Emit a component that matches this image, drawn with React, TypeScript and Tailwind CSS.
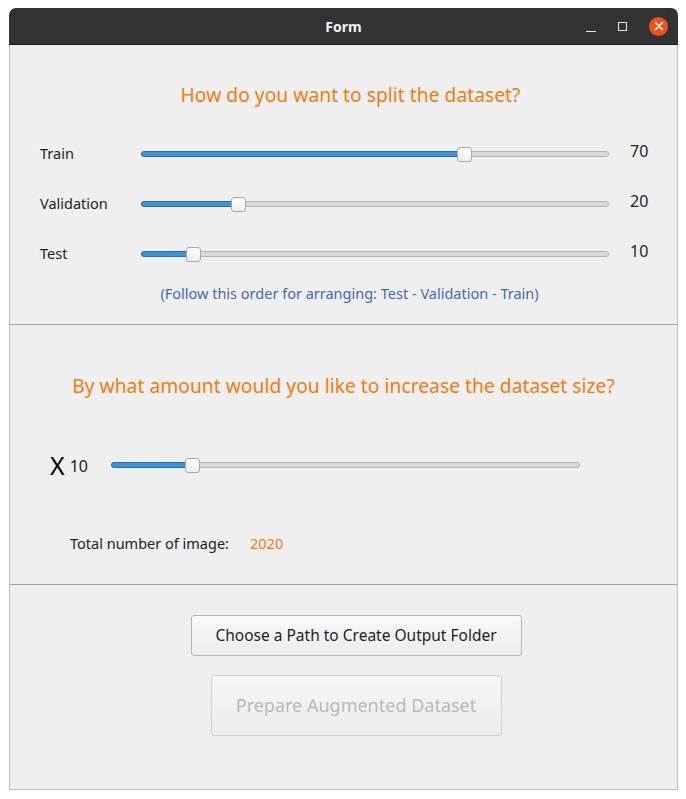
import React from "react";

const font = { fontFamily: '"Noto Sans", "Open Sans", sans-serif' };

function Slider({ value, className }: { value: number; className?: string }) {
    // value is a 0..1 fraction of the usable track
    return (
        <div className={`relative h-[16px] ${className ?? ""}`}>
            <div className="absolute left-0 right-0 top-[5px] h-[6px] rounded-full border border-[#b3b3b3] bg-[#d9d9d9]" />
            <div
                className="absolute left-0 top-[5px] h-[6px] rounded-full border border-[#2d6ea8] bg-[#3d94dc]"
                style={{ width: `calc(${value} * (100% - 16px) + 8px)` }}
            />
            <div
                className="absolute top-[0.5px] h-[15px] w-[15px] rounded-[3px] border border-[#a8a8a8] bg-gradient-to-b from-white to-[#ededed]"
                style={{ left: `calc(${value} * (100% - 16px))` }}
            />
        </div>
    );
}

function SplitRow({ label, value }: { label: string; value: number }) {
    return (
        <div className="flex h-[50px] items-center">
            <span className="w-[101px] text-[14.5px] text-[#1e1e1e]">{label}</span>
            <Slider value={value / 100} className="w-[468px]" />
            <span className="ml-[21px] -mt-[7px] text-[16px] text-[#1e1e1e]">{value}</span>
        </div>
    );
}

export default function App() {
    return (
        <div className="min-h-[799px] bg-white pt-[8px] pl-[9px]" style={font}>
            <div className="w-[669px] overflow-hidden rounded-t-[7px]">
                {/* title bar */}
                <div className="relative flex h-[37px] items-center justify-center border-b border-[#1c1c1c] bg-[#323232]">
                    <span className="text-[14px] font-bold text-[#f3f3f3]">Form</span>
                    <div className="absolute right-[10px] top-0 flex h-full items-center gap-[20px]">
                        <div className="mt-[10px] h-[1px] w-[10px] bg-[#e8e8e8]" />
                        <div className="mx-[2px] h-[9px] w-[9px] border border-[#e8e8e8]" />
                        <div className="flex h-[19px] w-[19px] items-center justify-center rounded-full bg-[#e9541f]">
                            <svg width="10" height="10" viewBox="0 0 10 10">
                                <path d="M1.5 1.5 L8.5 8.5 M8.5 1.5 L1.5 8.5" stroke="#fff" strokeWidth="1.6" strokeLinecap="round" />
                            </svg>
                        </div>
                    </div>
                </div>

                <div className="border-x border-b border-[#bdbdbd] bg-[#efefef]">
                    {/* split section */}
                    <div className="flex flex-col pt-[37px] pb-[21px]">
                        <h1 className="pl-[14px] text-center text-[19.3px] leading-[26px] text-[#f47b10]">How do you want to split the dataset?</h1>
                        <div className="mt-[21px] flex flex-col pl-[30px]">
                            <SplitRow label="Train" value={70} />
                            <SplitRow label="Validation" value={20} />
                            <SplitRow label="Test" value={10} />
                        </div>
                        <p className="mt-[4px] pl-[12px] text-center text-[14.5px] leading-[20px] text-[#3c6db4]">
                            (Follow this order for arranging: Test - Validation - Train)
                        </p>
                    </div>

                    <div className="h-[1px] bg-[#a2a2a2]" />

                    {/* augmentation section */}
                    <div className="flex h-[259px] flex-col">
                        <h2 className="mt-[48px] text-center text-[19.3px] leading-[26px] text-[#f47b10]">
                            By what amount would you like to increase the dataset size?
                        </h2>
                        <div className="mt-[52px] flex items-center pl-[40px]">
                            <span className="text-[25px] leading-[28px] text-black">X</span>
                            <span className="ml-[5px] mt-[2px] w-[41px] text-[16px] text-[#1e1e1e]">10</span>
                            <Slider value={0.165} className="w-[469px]" />
                        </div>
                        <div className="mt-[54px] flex items-center pl-[60px] text-[14.5px]">
                            <span className="w-[180px] text-[#1e1e1e]">Total number of image:</span>
                            <span className="text-[#f47b10]">2020</span>
                        </div>
                    </div>

                    <div className="h-[1px] bg-[#a2a2a2]" />

                    {/* actions */}
                    <div className="flex h-[204px] flex-col items-center pt-[30px] pl-[25px]">
                        <button className="h-[41px] w-[331px] rounded-[3px] border border-[#b5b5b5] bg-gradient-to-b from-[#fafafa] to-[#ececec] text-[15.5px] text-[#1e1e1e]">
                            Choose a Path to Create Output Folder
                        </button>
                        <button
                            disabled
                            className="mt-[19px] h-[61px] w-[291px] rounded-[3px] border border-[#cfcfcf] bg-gradient-to-b from-[#f7f7f7] to-[#ececec] text-[18px] text-[#b9b9b9]"
                        >
                            Prepare Augmented Dataset
                        </button>
                    </div>
                </div>
            </div>
        </div>
    );
}
